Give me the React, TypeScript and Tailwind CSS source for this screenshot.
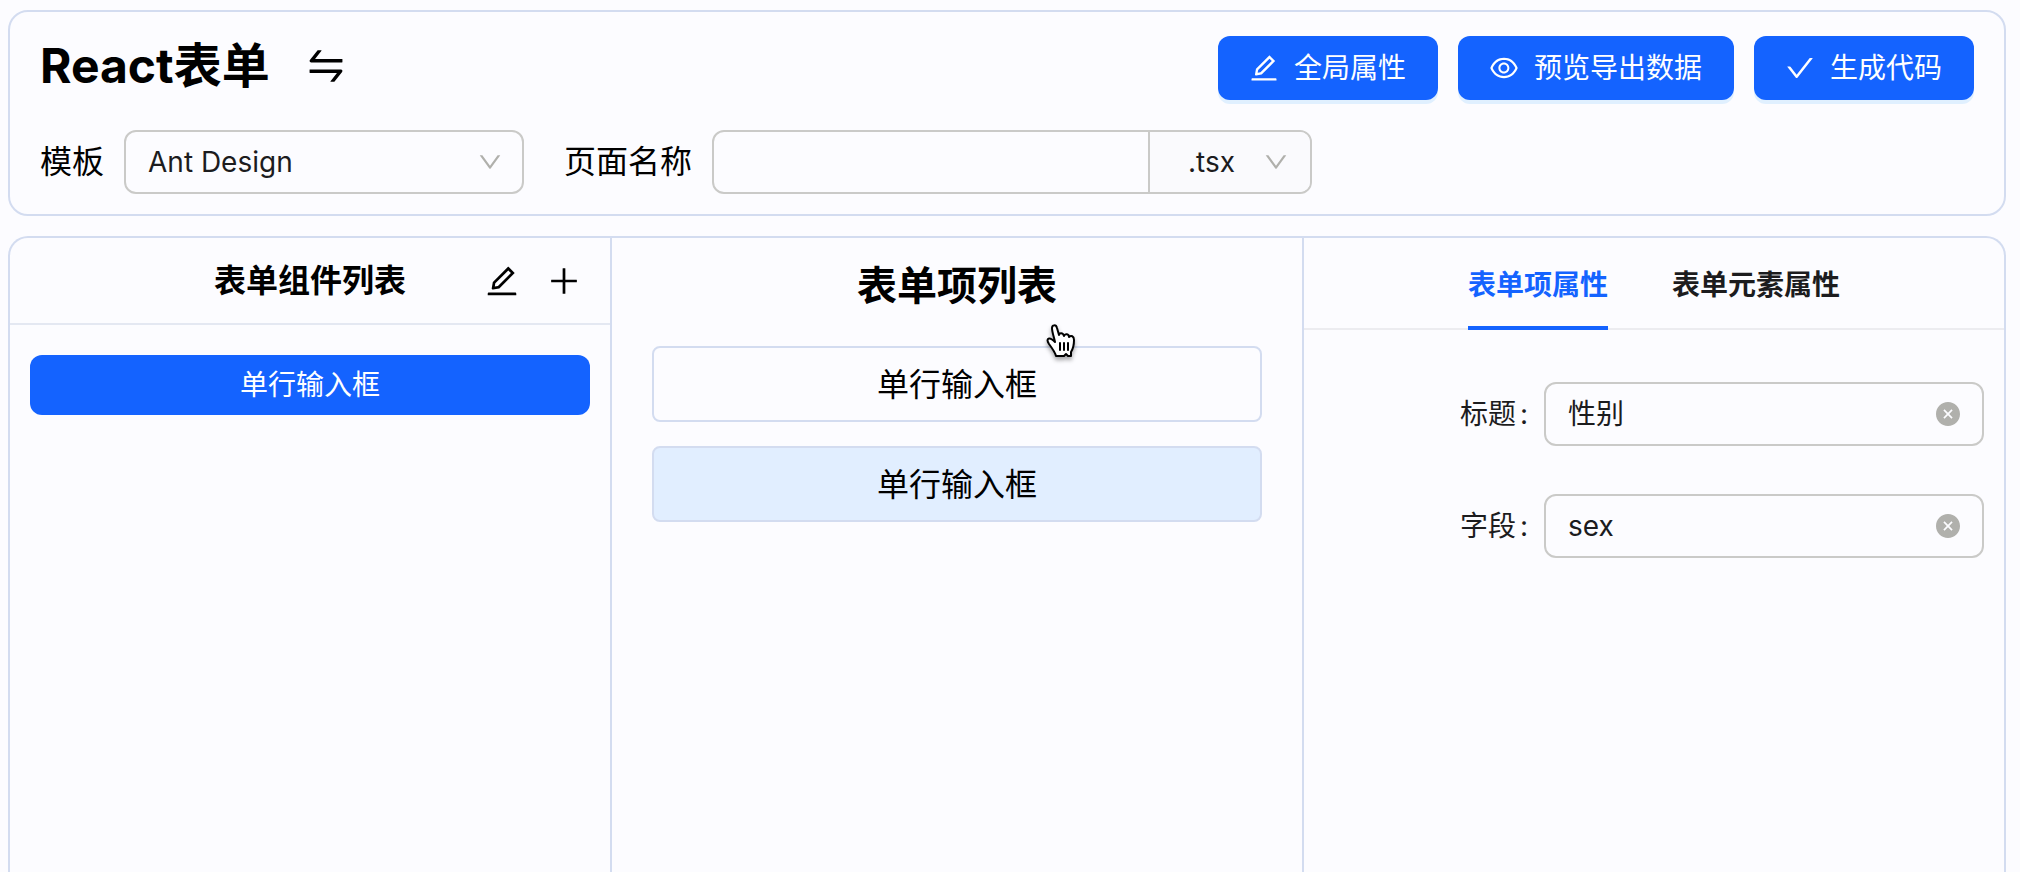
import { useState } from "react";
import {
  AiFillCloseCircle,
  AiOutlineCheck,
  AiOutlineDown,
  AiOutlineEdit,
  AiOutlineEye,
  AiOutlinePlus,
  AiOutlineSwap,
} from "react-icons/ai";

// crops the empty margin that the Ant icons carry around their strokes
const VIEW = "64 64 896 896";

const actions = [
  { label: "全局属性", Icon: AiOutlineEdit },
  { label: "预览导出数据", Icon: AiOutlineEye },
  { label: "生成代码", Icon: AiOutlineCheck },
];

const tabs = ["表单项属性", "表单元素属性"];

function Header() {
  const [pageName, setPageName] = useState("");

  return (
    <header className="rounded-[20px] border-2 border-[#d3dcf0] px-[30px] pt-6 pb-5">
      <div className="flex items-center justify-between">
        <div className="flex items-center gap-9 pb-1">
          <h1 className="text-5xl leading-[60px] font-bold">React表单</h1>
          <button type="button" aria-label="切换">
            <AiOutlineSwap viewBox={VIEW} className="size-10" />
          </button>
        </div>

        <div className="flex gap-5">
          {actions.map(({ label, Icon }) => (
            <button
              key={label}
              type="button"
              className="flex h-16 items-center gap-4 rounded-xl bg-[#1463ff] px-8 text-[28px] text-white shadow-[0_4px_0_#e0f0ff]"
            >
              <Icon viewBox={VIEW} className="size-7" />
              {label}
            </button>
          ))}
        </div>
      </div>

      <div className="mt-[30px] flex items-center gap-10">
        <div className="flex items-center gap-5">
          <label htmlFor="template" className="text-[32px]">
            模板
          </label>
          <div className="relative w-[400px]">
            <select
              id="template"
              className="h-16 w-full appearance-none rounded-xl border-2 border-[#cacac8] px-[22px] text-[28px] text-[#1c1c1e]"
            >
              <option>Ant Design</option>
            </select>
            <AiOutlineDown
              viewBox={VIEW}
              className="pointer-events-none absolute top-5 right-[22px] size-6 text-[#b0b0ac]"
            />
          </div>
        </div>

        <div className="flex items-center gap-5">
          <label htmlFor="page-name" className="text-[32px]">
            页面名称
          </label>
          <div className="flex h-16 w-[600px] overflow-hidden rounded-xl border-2 border-[#cacac8]">
            <input
              id="page-name"
              value={pageName}
              onChange={(e) => setPageName(e.target.value)}
              className="min-w-0 flex-1 px-[22px] text-[28px] outline-none"
            />
            <div className="relative w-[162px] border-l-2 border-[#cacac8] bg-[#fafafd]">
              <select
                aria-label="文件后缀"
                className="h-full w-full appearance-none pl-[38px] text-[28px] text-[#1c1c1e]"
              >
                <option>.tsx</option>
              </select>
              <AiOutlineDown
                viewBox={VIEW}
                className="pointer-events-none absolute top-[18px] right-[22px] size-6 text-[#b0b0ac]"
              />
            </div>
          </div>
        </div>
      </div>
    </header>
  );
}

function ComponentList() {
  return (
    <section className="w-[602px] shrink-0 border-r-2 border-[#d3dcf0]">
      <div className="relative flex h-[87px] items-center justify-center border-b-2 border-[#e4e8f2]">
        <h2 className="text-[32px] font-bold">表单组件列表</h2>
        <div className="absolute right-[30px] flex gap-[30px]">
          <button type="button" aria-label="编辑">
            <AiOutlineEdit viewBox={VIEW} className="size-8" />
          </button>
          <button type="button" aria-label="添加">
            <AiOutlinePlus viewBox={VIEW} className="size-8" />
          </button>
        </div>
      </div>
      <div className="px-5 pt-[30px]">
        <button type="button" className="h-[60px] w-full rounded-xl bg-[#1463ff] text-[28px] text-white">
          单行输入框
        </button>
      </div>
    </section>
  );
}

function HandCursor() {
  return (
    <svg
      viewBox="0 0 32 40"
      className="pointer-events-none absolute -top-[22px] left-[393px] h-10 w-8 drop-shadow-[0_3px_2px_rgba(0,0,0,0.35)]"
      fill="white"
      stroke="black"
      strokeWidth="2"
      strokeLinejoin="round"
      strokeLinecap="round"
    >
      <path d="M11 32C10 28 7 24 4 20C2 17 2 15 4 14.500C6 14 8 16 10 18C9 13 7 8 7 4C7 1 11 0 12 4L14 11C14 9 18 8 19 12C20 9 24 10 24 13C26 11 29 12 29 16C29 21 28 25 26 28L26 32L23 32L21 30L19 32Z" />
      <path d="M15 19V26M19 19V26M23 19V26" fill="none" />
    </svg>
  );
}

function ItemList() {
  const [active, setActive] = useState(1);

  return (
    <section className="min-w-0 flex-1 px-10 pt-[23px]">
      <h2 className="text-center text-[40px] leading-[50px] font-bold">表单项列表</h2>
      <div className="relative mt-[35px] flex flex-col gap-6">
        {["单行输入框", "单行输入框"].map((name, i) => (
          <button
            key={i}
            type="button"
            onClick={() => setActive(i)}
            className={`h-[76px] rounded-lg border-2 border-[#d3dcf0] pt-0.5 text-[32px] ${
              i === active ? "bg-[#e1eeff]" : ""
            }`}
          >
            {name}
          </button>
        ))}
        <HandCursor />
      </div>
    </section>
  );
}

function Field({ id, label, initial }: { id: string; label: string; initial: string }) {
  const [value, setValue] = useState(initial);

  return (
    <div className="flex items-center">
      <label htmlFor={id} className="flex w-1/3 justify-end gap-1 pr-4 text-[28px] text-[#1c1c1e]">
        {label}
        <span>:</span>
      </label>
      <div className="flex h-16 w-2/3 items-center rounded-xl border-2 border-[#cacac8] px-[22px]">
        <input
          id={id}
          value={value}
          onChange={(e) => setValue(e.target.value)}
          className="min-w-0 flex-1 text-[28px] text-[#1c1c1e] outline-none"
        />
        <button type="button" aria-label="清除" onClick={() => setValue("")}>
          <AiFillCloseCircle viewBox={VIEW} className="size-6 text-[#b0b0ac]" />
        </button>
      </div>
    </div>
  );
}

function PropertyPanel() {
  const [tab, setTab] = useState(tabs[0]);

  return (
    <section className="w-[702px] shrink-0 border-l-2 border-[#d3dcf0]">
      <div role="tablist" className="flex h-[92px] justify-center gap-16 border-b-2 border-[#ececf0]">
        {tabs.map((name) => (
          <button
            key={name}
            type="button"
            role="tab"
            aria-selected={name === tab}
            onClick={() => setTab(name)}
            className={`-mb-0.5 border-b-4 pt-1.5 text-[28px] font-bold ${
              name === tab ? "border-[#1463ff] text-[#1463ff]" : "border-transparent text-[#1c1c1e]"
            }`}
          >
            {name}
          </button>
        ))}
      </div>
      <div className="flex flex-col gap-12 px-5 pt-[52px]">
        <Field id="field-title" label="标题" initial="性别" />
        <Field id="field-key" label="字段" initial="sex" />
      </div>
    </section>
  );
}

export default function App() {
  return (
    <div className="flex min-h-screen flex-col gap-5 bg-[#fcfcff] pt-2.5 pr-3.5 pl-2 font-['Inter','Noto_Sans_CJK_SC',sans-serif] text-black">
      <Header />
      <main className="flex flex-1 rounded-t-[20px] border-2 border-b-0 border-[#d3dcf0]">
        <ComponentList />
        <ItemList />
        <PropertyPanel />
      </main>
    </div>
  );
}
